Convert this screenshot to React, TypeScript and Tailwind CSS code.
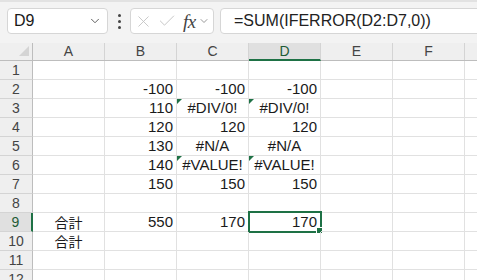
import { ChevronDown, X, Check } from "lucide-react"

type Cell = { v?: string; align?: "right" | "center"; err?: boolean; cjk?: boolean }

const cols = ["A", "B", "C", "D", "E", "F", ""]

const n = (v: string): Cell => ({ v, align: "right" })
const e = (v: string): Cell => ({ v, align: "center", err: true })
const na = (v: string): Cell => ({ v, align: "center" })
const j = (v: string): Cell => ({ v, align: "center", cjk: true })

const rows: Cell[][] = [
  [],
  [{}, n("-100"), n("-100"), n("-100")],
  [{}, n("110"), e("#DIV/0!"), e("#DIV/0!")],
  [{}, n("120"), n("120"), n("120")],
  [{}, n("130"), na("#N/A"), na("#N/A")],
  [{}, n("140"), e("#VALUE!"), e("#VALUE!")],
  [{}, n("150"), n("150"), n("150")],
  [],
  [j("合計"), n("550"), n("170"), n("170")],
  [j("合計")],
  [],
  [],
]

export default function App() {
  return (
    <div className="w-[477px] h-[280px] overflow-hidden bg-white font-['Liberation_Sans',sans-serif] text-[#1a1a1a]">
      {/* 数式バー */}
      <div className="h-[43px] bg-[#f3f3f3] border-t-2 border-[#e2e2e2] flex items-start pt-[6px] pl-[7px]">
        <div className="w-[101px] h-[26px] shrink-0 bg-white border border-[#d6d6d6] rounded-[4px] flex items-center pl-[6px] pr-[5px]">
          <span className="text-[16px] flex-1">D9</span>
          <ChevronDown size={14} strokeWidth={1.6} className="text-[#555]" />
        </div>
        <div className="w-[22px] h-[26px] shrink-0 flex flex-col items-center justify-center gap-[3px]">
          <span className="w-[3px] h-[3px] bg-[#444] rounded-full" />
          <span className="w-[3px] h-[3px] bg-[#444] rounded-full" />
          <span className="w-[3px] h-[3px] bg-[#444] rounded-full" />
        </div>
        <div className="w-[84px] h-[26px] shrink-0 bg-white border border-[#d6d6d6] rounded-[4px] flex items-center pl-[3px]">
          <X size={19} strokeWidth={1.1} className="text-[#c2c2c2]" />
          <Check size={20} strokeWidth={1.1} className="text-[#c2c2c2] ml-[4px]" />
          <span className="ml-[6px] font-['Liberation_Serif',serif] italic text-[19px] leading-none text-[#444] tracking-[-0.5px]">fx</span>
          <ChevronDown size={12} strokeWidth={1.5} className="text-[#777] ml-[2px]" />
        </div>
        <div className="w-[300px] h-[26px] shrink-0 ml-[6px] bg-white border border-[#d6d6d6] rounded-l-[4px] flex items-center pl-[13px] text-[16px] text-[#222]">
          =SUM(IFERROR(D2:D7,0))
        </div>
      </div>

      {/* 列見出し */}
      <div className="flex h-[18px] bg-[#efefef] border-b border-[#bdbdbd]">
        <div className="w-[33px] shrink-0 border-r border-[#bdbdbd] relative">
          <svg className="absolute left-[19px] top-[3px]" width="10" height="10" viewBox="0 0 10 10">
            <polygon points="10,0 10,10 0,10" fill="#d4d4d4" />
          </svg>
        </div>
        {cols.map((c, i) => (
          <div
            key={i}
            className={
              c === "D"
                ? "w-[72px] shrink-0 border-r border-[#d4d4d4] bg-[#e0e0e0] border-b-2 border-b-[#1e7145] -mb-px flex items-center justify-center text-[14px] text-[#1e5c36]"
                : "w-[72px] shrink-0 border-r border-[#d4d4d4] flex items-center justify-center text-[14px] text-[#444]"
            }
          >
            {c}
          </div>
        ))}
      </div>

      {/* セル */}
      {rows.map((r, ri) => (
        <div key={ri} className="flex h-[19px]">
          <div
            className={
              ri === 8
                ? "w-[33px] shrink-0 bg-[#e0e0e0] border-r-2 border-[#1e7145] border-b border-b-[#d4d4d4] flex items-center justify-center text-[14px] text-[#1e5c36]"
                : "w-[33px] shrink-0 bg-[#efefef] border-r border-[#bdbdbd] border-b border-b-[#d4d4d4] flex items-center justify-center text-[14px] text-[#444]"
            }
          >
            {ri + 1}
          </div>
          {cols.map((_, ci) => {
            const cell = r[ci] || {}
            return (
              <div
                key={ci}
                className={
                  "w-[72px] shrink-0 border-r border-b border-[#e1e1e1] relative flex items-center text-[15px] " +
                  (cell.align === "right" ? "justify-end pr-[3px]" : "justify-center")
                }
              >
                {cell.err && (
                  <svg className="absolute left-0 top-0" width="5" height="5" viewBox="0 0 5 5">
                    <polygon points="0,0 5,0 0,5" fill="#1e7145" />
                  </svg>
                )}
                {cell.v && (
                  <span className={cell.cjk ? "font-['Noto_Sans_CJK_JP',sans-serif] text-[14px]" : ""}>{cell.v}</span>
                )}
                {ri === 8 && ci === 3 && (
                  <>
                    <div className="absolute -left-[1px] -top-[2px] w-[74px] h-[22px] border-2 border-[#1e7145]" />
                    <div className="absolute -right-[3px] -bottom-[3px] w-[7px] h-[7px] bg-[#1e7145] border border-white" />
                  </>
                )}
              </div>
            )
          })}
        </div>
      ))}
    </div>
  )
}
